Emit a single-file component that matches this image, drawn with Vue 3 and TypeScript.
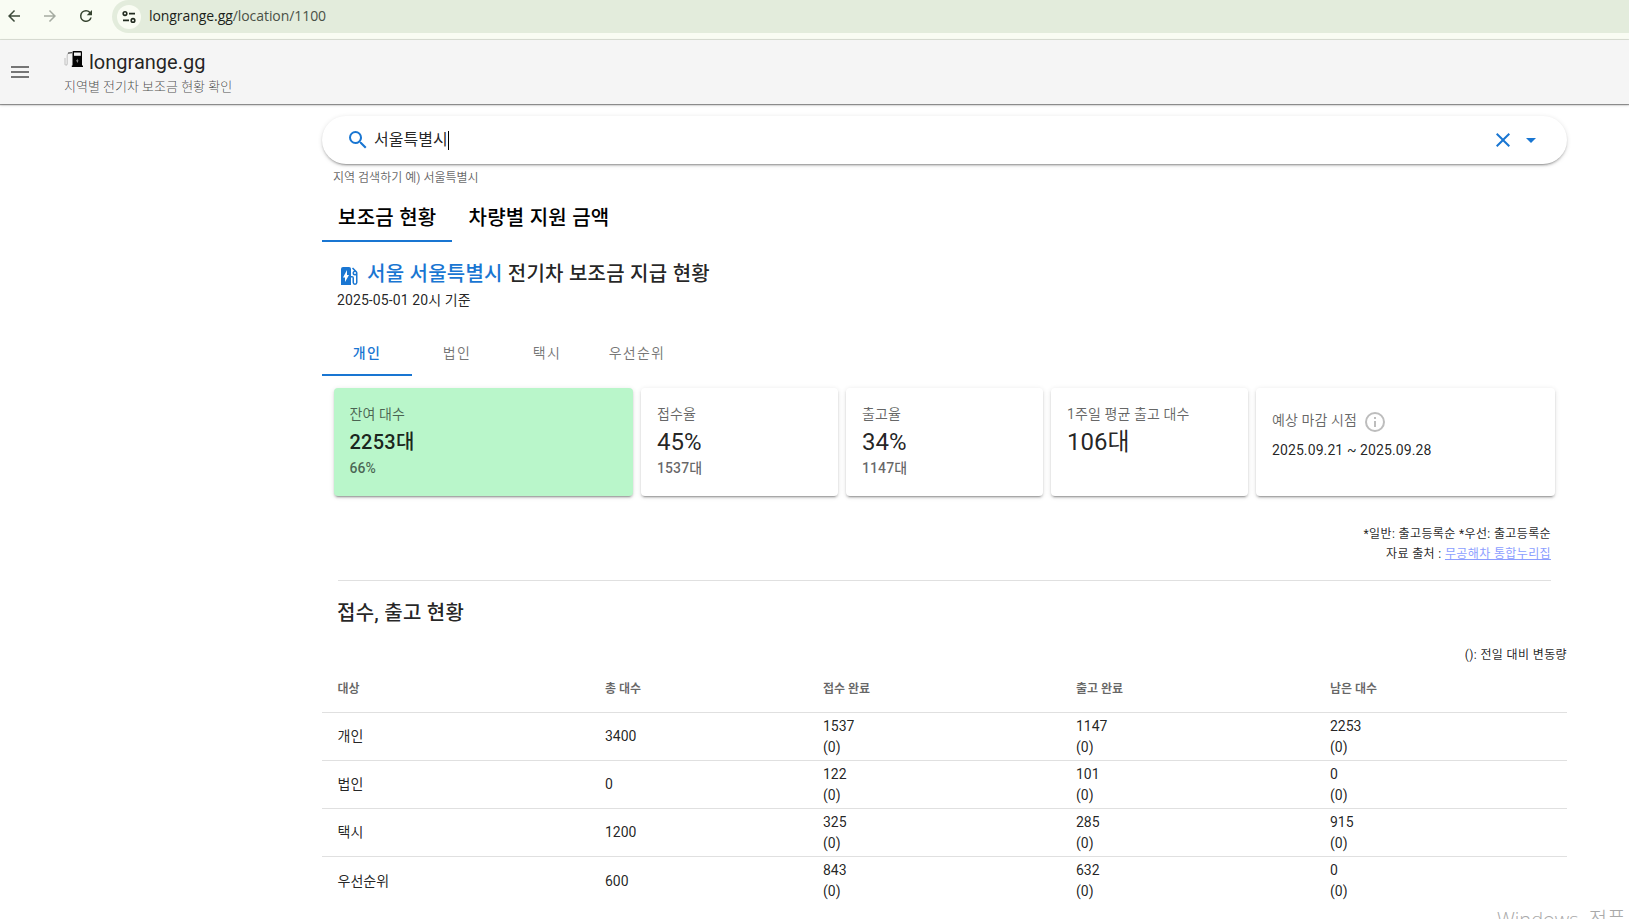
<script setup lang="ts">
import { ref } from 'vue'

interface StatCard {
  label: string
  value: string
  sub?: string
  kind?: 'remain' | 'period'
}

interface Row {
  target: string
  total: number
  counts: number[]
}

const region = ref('서울특별시')
const mainTabs = ['보조금 현황', '차량별 지원 금액']
const groupTabs = ['개인', '법인', '택시', '우선순위']
const activeMain = ref(0)
const activeGroup = ref(0)

const cards: StatCard[] = [
  { label: '잔여 대수', value: '2253대', sub: '66%', kind: 'remain' },
  { label: '접수율', value: '45%', sub: '1537대' },
  { label: '출고율', value: '34%', sub: '1147대' },
  { label: '1주일 평균 출고 대수', value: '106대' },
  { label: '예상 마감 시점', value: '2025.09.21 ~ 2025.09.28', kind: 'period' },
]

const headers = ['대상', '총 대수', '접수 완료', '출고 완료', '남은 대수']
const rows: Row[] = [
  { target: '개인', total: 3400, counts: [1537, 1147, 2253] },
  { target: '법인', total: 0, counts: [122, 101, 0] },
  { target: '택시', total: 1200, counts: [325, 285, 915] },
  { target: '우선순위', total: 600, counts: [843, 632, 0] },
]
</script>

<template>
  <div class="page">
    <div class="browser">
      <svg class="nav" viewBox="0 0 24 24"><path fill="#3c4a3a" d="M20 11H7.83l5.59-5.59L12 4l-8 8 8 8 1.41-1.41L7.83 13H20v-2z" /></svg>
      <svg class="nav" viewBox="0 0 24 24"><path fill="#a5aba1" d="M12 4l-1.41 1.41L16.17 11H4v2h12.17l-5.58 5.59L12 20l8-8z" /></svg>
      <svg class="nav" viewBox="0 0 24 24"><path fill="#36432f" d="M17.65 6.35A7.96 7.96 0 0 0 12 4a8 8 0 1 0 7.73 10h-2.08A6 6 0 1 1 12 6c1.66 0 3.14.69 4.22 1.78L13 11h7V4l-2.35 2.35z" /></svg>
      <div class="omnibox">
        <span class="site">
          <svg viewBox="0 0 14 14" fill="none" stroke="#222b20" stroke-width="1.6"><circle cx="3" cy="3.6" r="1.8" /><path d="M7 3.6h6M1 10.4h6" /><circle cx="11" cy="10.4" r="1.8" /></svg>
        </span>
        <span class="url"><b>longrange.gg</b>/location/1100</span>
      </div>
    </div>

    <header class="appbar">
      <svg class="menu" viewBox="0 0 24 24"><path fill="#757575" d="M3 6h18v2H3zM3 11h18v2H3zM3 16h18v2H3z" /></svg>
      <div class="brand">
        <div class="brand-name">
          <svg class="pump" viewBox="0 0 20 18">
            <path d="M1 8v6.500q1.300 1.500 2.200-.5V5.500Q3.200 3.500 4.500 3.200" fill="none" stroke="#c4c4c4" stroke-width="1.100" />
            <path d="M4 3.200L8 2.600" stroke="#444" stroke-width="1.200" />
            <path d="M8.500 2Q8.500 1 9.500 1h7.500q1 0 1 1V15.500h1V17H7.800v-1.500h.7z" fill="#050505" />
            <path d="M10 2.500h6.800v3.300H10z" fill="#f5f5f5" />
            <path d="M13.700 8.500l-1.600 2.700h1.200l-.4 2 1.700-2.800h-1.200z" fill="#bbb" />
          </svg>
          <span>longrange.gg</span>
        </div>
        <div class="brand-sub">지역별 전기차 보조금 현황 확인</div>
      </div>
    </header>

    <main class="content">
      <div class="search">
        <svg class="i24" viewBox="0 0 24 24"><path fill="#1976d2" d="M9.500 3A6.500 6.500 0 0 1 16 9.500c0 1.610-.59 3.090-1.560 4.230l.27.27h.79l5 5-1.500 1.500-5-5v-.79l-.27-.27A6.516 6.516 0 0 1 9.500 16a6.500 6.500 0 1 1 0-13m0 2C7 5 5 7 5 9.500S7 14 9.500 14 14 12 14 9.500 12 5 9.500 5z" /></svg>
        <span class="query">{{ region }}</span><span class="caret"></span>
        <svg class="i24 clear" viewBox="0 0 24 24"><path fill="#1976d2" d="M19 6.410L17.590 5 12 10.590 6.410 5 5 6.410 10.590 12 5 17.590 6.410 19 12 13.410 17.590 19 19 17.590 13.410 12z" /></svg>
        <svg class="i24 drop" viewBox="0 0 24 24"><path fill="#1976d2" d="M7 10l5 5 5-5H7z" /></svg>
      </div>
      <div class="hint">지역 검색하기 예) 서울특별시</div>

      <nav class="tabs main-tabs">
        <button v-for="(t, i) in mainTabs" :key="t" :class="{ on: i === activeMain }" @click="activeMain = i">{{ t }}</button>
      </nav>

      <h1 class="title">
        <svg class="i24" viewBox="0 0 24 24"><path fill="#1976d2" d="M19.770 7.230l.01-.01-3.720-3.720L15 4.560l2.110 2.110C16.170 7 15.500 7.930 15.500 9a2.500 2.500 0 0 0 2.500 2.500c.36 0 .69-.08 1-.21v7.210a1 1 0 0 1-2 0V14a2 2 0 0 0-2-2h-1V5a2 2 0 0 0-2-2H6a2 2 0 0 0-2 2v16h10v-7.500h1.500v5a2.500 2.500 0 0 0 5 0V9c0-.69-.28-1.320-.73-1.770M18 10a1 1 0 1 1 0-2 1 1 0 0 1 0 2M8 18v-4.500H6L10 6v5h2z" /></svg>
        <span class="place">서울 서울특별시</span><span>전기차 보조금 지급 현황</span>
      </h1>
      <div class="date">2025-05-01 20시 기준</div>

      <nav class="tabs group-tabs">
        <button v-for="(t, i) in groupTabs" :key="t" :class="{ on: i === activeGroup }" @click="activeGroup = i">{{ t }}</button>
      </nav>

      <section class="cards">
        <article v-for="c in cards" :key="c.label" class="card" :class="c.kind">
          <div class="label">
            <span>{{ c.label }}</span>
            <svg v-if="c.kind === 'period'" class="i24" viewBox="0 0 24 24"><path fill="#bdbdbd" d="M11 9h2V7h-2m1 13a8 8 0 1 1 0-16 8 8 0 0 1 0 16m0-18a10 10 0 1 0 0 20 10 10 0 0 0 0-20m-1 15h2v-6h-2z" /></svg>
          </div>
          <div class="value">{{ c.value }}</div>
          <div v-if="c.sub" class="sub">{{ c.sub }}</div>
        </article>
      </section>

      <div class="notes">
        <div>*일반: 출고등록순 *우선: 출고등록순</div>
        <div>자료 출처 : <a>무공해차 통합누리집</a></div>
      </div>

      <h2 class="section">접수, 출고 현황</h2>
      <div class="legend">(): 전일 대비 변동량</div>

      <table class="grid">
        <thead>
          <tr><th v-for="h in headers" :key="h">{{ h }}</th></tr>
        </thead>
        <tbody>
          <tr v-for="r in rows" :key="r.target">
            <td>{{ r.target }}</td>
            <td>{{ r.total }}</td>
            <td v-for="(n, i) in r.counts" :key="i">{{ n }}<br />(0)</td>
          </tr>
        </tbody>
      </table>
    </main>

    <div class="watermark">Windows 정품</div>
  </div>
</template>

<style>
html,
body {
  margin: 0;
  overflow: hidden;
  background: #fff;
}
</style>

<style scoped>
.page {
  position: relative;
  width: 1629px;
  height: 919px;
  overflow: hidden;
  background: #fff;
  color: rgba(0, 0, 0, 0.87);
  font-family: Roboto, 'Noto Sans CJK KR', sans-serif;
  font-size: 14px;
}
.page * {
  box-sizing: border-box;
}
svg {
  display: block;
  flex: none;
}
.i24 {
  width: 24px;
  height: 24px;
}
.browser {
  display: flex;
  height: 40px;
  padding-left: 5px;
  background: #f9fcf3;
  border-bottom: 1px solid #dde2d7;
}
.nav {
  width: 18px;
  height: 18px;
  margin: 7px 18px 0 0;
}
.omnibox {
  display: flex;
  align-items: center;
  flex: 1;
  height: 33px;
  margin-left: -1px;
  padding-left: 5px;
  background: #e3ecdc;
  border-radius: 17px 0 0 17px;
}
.site {
  display: grid;
  place-items: center;
  width: 24px;
  height: 24px;
  margin-right: 8px;
  border-radius: 50%;
  background: #f9fcf3;
}
.site svg {
  width: 14px;
  height: 14px;
}
.url {
  margin-bottom: 2px;
  font: 14px/20px 'Open Sans', sans-serif;
  letter-spacing: -0.07px;
  color: #4a5147;
}
.url b {
  font-weight: 400;
  color: #1b1f1a;
}
.appbar {
  position: relative;
  display: flex;
  height: 64px;
  background: #f5f5f5;
  box-shadow: 0 1px 1px rgba(0, 0, 0, 0.38), 0 1px 3px rgba(0, 0, 0, 0.2);
}
.menu {
  width: 24px;
  height: 24px;
  margin: 20px 32px 0 8px;
}
.brand {
  padding-top: 10px;
}
.brand-name {
  display: flex;
  height: 24px;
  font-size: 20px;
  line-height: 24px;
}
.pump {
  width: 20px;
  height: 18px;
  margin-right: 5px;
}
.brand-sub {
  margin-top: 3px;
  font-size: 13px;
  font-weight: 300;
  line-height: 20px;
  color: rgba(0, 0, 0, 0.72);
}
.content {
  width: 1245px;
  margin: 12px 0 0 322px;
}
.search {
  display: flex;
  align-items: center;
  height: 48px;
  padding: 0 24px 0 24px;
  border-radius: 24px;
  background: #fff;
  box-shadow: 0 3px 1px -2px rgba(0, 0, 0, 0.2), 0 2px 2px 0 rgba(0, 0, 0, 0.14), 0 1px 5px 0 rgba(0, 0, 0, 0.12);
}
.query {
  margin-left: 4px;
  font-size: 16px;
  line-height: 24px;
}
.caret {
  width: 1px;
  height: 19px;
  background: #000;
}
.clear {
  margin-left: auto;
}
.drop {
  margin-left: 4px;
}
.hint {
  margin: 4px 0 0 11px;
  font-size: 12px;
  line-height: 20px;
  color: rgba(0, 0, 0, 0.6);
}
.tabs {
  display: flex;
  height: 48px;
}
.tabs button {
  position: relative;
  min-width: 90px;
  padding: 0 16px;
  border: 0;
  background: none;
  font-family: inherit;
  font-weight: 500;
  color: rgba(0, 0, 0, 0.54);
}
.tabs .on::after {
  content: '';
  position: absolute;
  left: 0;
  right: 0;
  bottom: 0;
  height: 2px;
  background: #1976d2;
}
.main-tabs {
  margin-top: 6px;
}
.main-tabs button {
  padding-bottom: 4px;
  font-size: 20px;
  letter-spacing: 0.25px;
  color: #000;
}
.group-tabs {
  margin-top: 18px;
}
.group-tabs button {
  padding-bottom: 1px;
  font-size: 14px;
  font-weight: 400;
  letter-spacing: 1.25px;
}
.group-tabs .on {
  color: #1976d2;
  font-weight: 500;
}
.title {
  display: flex;
  height: 32px;
  margin: 16px 0 0 15px;
  font-size: 20px;
  font-weight: 500;
  line-height: 32px;
  letter-spacing: 0.25px;
}
.title svg {
  margin: 6px 6px 0 0;
}
.place {
  margin-right: 5px;
  color: #1976d2;
}
.date {
  margin-left: 15px;
  line-height: 20px;
  letter-spacing: 0.1px;
}
.cards {
  display: grid;
  grid-template-columns: 299px repeat(3, 197px) 299px;
  gap: 8px;
  margin: 12px 12px 0;
}
.card {
  height: 108px;
  padding: 16px;
  border-radius: 4px;
  letter-spacing: 0.1px;
  box-shadow: 0 3px 1px -2px rgba(0, 0, 0, 0.2), 0 2px 2px 0 rgba(0, 0, 0, 0.14), 0 1px 5px 0 rgba(0, 0, 0, 0.12);
}
.label {
  display: flex;
  align-items: center;
  line-height: 20px;
  color: rgba(0, 0, 0, 0.6);
}
.value {
  margin-top: 2px;
  font-size: 24px;
  line-height: 32px;
  letter-spacing: 0;
}
.sub {
  margin-top: -1px;
  font-weight: 500;
  line-height: 22px;
  color: rgba(0, 0, 0, 0.6);
}
.remain {
  padding-left: 15.5px;
  background: #b9f6ca;
}
.remain .value {
  font-size: 20px;
  font-weight: 500;
  letter-spacing: 0.25px;
}
.period .label {
  height: 34px;
}
.period .label span {
  margin-bottom: 2px;
}
.period .label svg {
  margin: 2px 0 0 6px;
}
.period .value {
  margin-top: 2px;
  font-size: 14px;
  line-height: 20px;
  letter-spacing: 0.1px;
}
.notes {
  margin: 28px 16px 0;
  padding-bottom: 16px;
  border-bottom: 1px solid #e0e0e0;
  font-size: 12px;
  line-height: 20px;
  letter-spacing: 0.37px;
  text-align: right;
}
.notes a {
  color: #8c9eff;
  text-decoration: underline;
}
.section {
  margin: 16px 15px 0;
  font-size: 20px;
  font-weight: 500;
  line-height: 32px;
  letter-spacing: 0.25px;
}
.legend {
  margin-top: 16px;
  font-size: 12px;
  line-height: 20px;
  letter-spacing: 0.37px;
  text-align: right;
}
.grid {
  width: 1245px;
  table-layout: fixed;
  border-collapse: separate;
  border-spacing: 0;
  line-height: 21px;
}
.grid th,
.grid td {
  height: 48px;
  padding: 0 16px;
  text-align: left;
  border-bottom: 1px solid #e0e0e0;
}
.grid th:first-child,
.grid td:first-child {
  padding-left: 15.5px;
}
.grid th {
  padding-top: 2px;
  font-size: 12px;
  font-weight: 700;
  color: rgba(0, 0, 0, 0.6);
}
.grid th:nth-child(1) {
  width: 267px;
}
.grid th:nth-child(2) {
  width: 218px;
}
.grid th:nth-child(3) {
  width: 253px;
}
.grid th:nth-child(4) {
  width: 254px;
}
.grid tbody tr:last-child td {
  border-bottom: 0;
}
.watermark {
  position: absolute;
  left: 1497px;
  top: 906px;
  font: 300 20px/28px 'Open Sans', 'Noto Sans CJK KR', sans-serif;
  word-spacing: 5px;
  white-space: nowrap;
  color: #a9a9a9;
}
</style>
